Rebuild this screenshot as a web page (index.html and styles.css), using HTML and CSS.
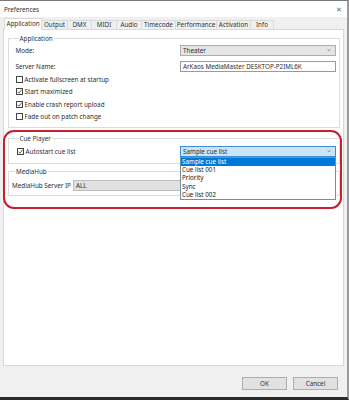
FILE: index.html
```html
<!DOCTYPE html>
<html>
<head>
<meta charset="utf-8">
<link rel="stylesheet" href="styles.css">
</head>
<body>
<div class="window">
  <div class="titlebar">
    <span class="title">Preferences</span>
    <span class="close">✕</span>
  </div>
  <div class="tabs">
    <div class="tab selected w-app">Application</div>
    <div class="tab w-out">Output</div>
    <div class="tab w-dmx">DMX</div>
    <div class="tab w-midi">MIDI</div>
    <div class="tab w-audio">Audio</div>
    <div class="tab w-tc">Timecode</div>
    <div class="tab w-perf">Performance</div>
    <div class="tab w-act">Activation</div>
    <div class="tab w-info">Info</div>
  </div>
  <div class="panel">
    <fieldset class="group app">
      <legend>Application</legend>
      <div class="row first">
        <span class="label">Mode:</span>
        <div class="combo gray"><span>Theater</span><span class="chev">⌄</span></div>
      </div>
      <div class="row second">
        <span class="label">Server Name:</span>
        <div class="field">ArKaos MediaMaster DESKTOP-P2IML6K</div>
      </div>
      <div class="check"><span class="box"></span>Activate fullscreen at startup</div>
      <div class="check"><span class="box"><svg viewBox="0 0 7 7" width="7" height="7"><path d="M1.3 3.6 L2.9 5.2 L5.8 1.6" fill="none" stroke="#333" stroke-width="0.8"/></svg></span>Start maximized</div>
      <div class="check"><span class="box"><svg viewBox="0 0 7 7" width="7" height="7"><path d="M1.3 3.6 L2.9 5.2 L5.8 1.6" fill="none" stroke="#333" stroke-width="0.8"/></svg></span>Enable crash report upload</div>
      <div class="check"><span class="box"></span>Fade out on patch change</div>
    </fieldset>
    <fieldset class="group cue">
      <legend>Cue Player</legend>
      <div class="row cuerow">
        <div class="check inline"><span class="box"><svg viewBox="0 0 7 7" width="7" height="7"><path d="M1.3 3.6 L2.9 5.2 L5.8 1.6" fill="none" stroke="#333" stroke-width="0.8"/></svg></span>Autostart cue list</div>
        <div class="combo blue">
          <span>Sample cue list</span><span class="chev">⌄</span>
          <ul class="dropdown">
            <li class="hl">Sample cue list</li>
            <li>Cue list 001</li>
            <li>Priority</li>
            <li>Sync</li>
            <li>Cue list 002</li>
          </ul>
        </div>
      </div>
    </fieldset>
    <fieldset class="group hub">
      <legend>MediaHub</legend>
      <div class="row hubrow">
        <span class="hublabel">MediaHub Server IP</span>
        <div class="field grayfield">ALL</div>
      </div>
    </fieldset>
  </div>
  <div class="footer">
    <button class="btn">OK</button>
    <button class="btn">Cancel</button>
  </div>
  <div class="highlight"></div>
</div>
</body>
</html>
```

FILE: styles.css
```css
* { box-sizing: border-box; }
html, body {
  margin: 0;
  padding: 0;
}
body {
  width: 349px;
  height: 400px;
  overflow: hidden;
  background: #f0f0f0;
  font-family: "Noto Sans", "Open Sans", sans-serif;
  font-size: 6.3px;
  color: #2e2e2e;
}
.window {
  position: relative;
  width: 349px;
  height: 400px;
  border-top: 1px solid #7a7a7a;
  border-right: 2px solid #9a9a9a;
  border-bottom: 3px solid #2a2a2a;
  background: #f0f0f0;
}
.titlebar {
  height: 16px;
  background: #ffffff;
  display: flex;
  align-items: center;
  justify-content: space-between;
  padding: 0 5px 0 4px;
}
.title { color: #333; }
.close { font-size: 7px; color: #666; }
.tabs {
  height: 12px;
  display: flex;
  align-items: flex-end;
  padding-left: 4px;
  position: relative;
  z-index: 2;
}
.tab {
  height: 9px;
  line-height: 8px;
  text-align: center;
  border: 1px solid #d9d9d9;
  border-bottom: none;
  border-left: none;
  background: #f0f0f0;
  color: #333;
  white-space: nowrap;
}
.tab.selected {
  height: 12px;
  line-height: 10px;
  background: #fff;
  border-left: 1px solid #d9d9d9;
  margin-bottom: -1px;
  padding-bottom: 1px;
}
.w-app { width: 38px; }
.w-out { width: 26px; }
.w-dmx { width: 24px; }
.w-midi { width: 25px; }
.w-audio { width: 25px; }
.w-tc { width: 34px; }
.w-perf { width: 41px; }
.w-act { width: 34px; }
.w-info { width: 23px; }
.panel {
  margin: 0 3px 0 3px;
  height: 337px;
  background: #fff;
  border: 1px solid #d9d9d9;
  padding: 4px 3px 0 4px;
}
.group {
  margin: 0;
  border: 1px solid #dcdcdc;
  min-width: 0;
}
.group legend {
  padding: 0 1px;
  margin-left: 3px;
  line-height: 9px;
  height: 9px;
  color: #333;
}
.app { padding: 0 3px 4px 6.5px; }
.row {
  display: flex;
  align-items: center;
  height: 11px;
}
.row.first { margin-top: 2px; }
.row.second { margin-top: 5px; margin-bottom: 1px; }
.label { flex: 1; }
.combo, .field {
  width: 156px;
  height: 11px;
  border: 1px solid #adadad;
  padding: 0 3px 0 2px;
  display: flex;
  align-items: center;
  justify-content: space-between;
  white-space: nowrap;
}
.combo.gray { background: #e5e5e5; }
.combo.blue {
  background: #cce4f7;
  border-color: #3c8fd6;
  position: relative;
}
.chev {
  font-size: 7px;
  line-height: 4px;
  height: 8px;
  color: #777;
}
.field { background: #fff; border-color: #9a9a9a; }
.check {
  height: 12.5px;
  display: flex;
  align-items: center;
  gap: 2px;
}
.check.inline { flex: 1; height: 11px; padding-left: 1px; }
.box {
  width: 7px;
  height: 7px;
  border: 1px solid #444;
  background: #fff;
  display: flex;
  align-items: center;
  justify-content: center;
  overflow: hidden;
}
.box svg { display: block; flex: none; }
.cue {
  margin-top: 6px;
  padding: 0 3px 6px 6.5px;
}
.cuerow { margin-top: 3px; }
.dropdown {
  position: absolute;
  top: 10px;
  left: -1px;
  right: -1px;
  margin: 0;
  padding: 0;
  list-style: none;
  background: #fff;
  border: 1px solid #6f8fa8;
  z-index: 5;
}
.dropdown li {
  height: 8.2px;
  line-height: 8.2px;
  padding-left: 1px;
  color: #222;
}
.dropdown li.hl {
  background: #0078d7;
  color: #fff;
}
.hub {
  margin-top: 3px;
  padding: 0 3px 4px 3px;
}
.hubrow { margin-top: 4px; }
.hublabel { width: 61px; white-space: nowrap; }
.field.grayfield {
  flex: 1;
  width: auto;
  background: #e1e1e1;
  border-color: #bdbdbd;
}
.footer {
  display: flex;
  justify-content: flex-end;
  gap: 6px;
  padding: 11px 9px 0 0;
}
.btn {
  width: 45px;
  height: 13px;
  padding: 0;
  font-family: inherit;
  font-size: 6.3px;
  color: #333;
  background: #e1e1e1;
  border: 1px solid #adadad;
}
.highlight {
  position: absolute;
  left: 3px;
  top: 129px;
  width: 339px;
  height: 79px;
  border: 2px solid #c91e2d;
  border-radius: 11px;
  pointer-events: none;
  z-index: 10;
}
```
